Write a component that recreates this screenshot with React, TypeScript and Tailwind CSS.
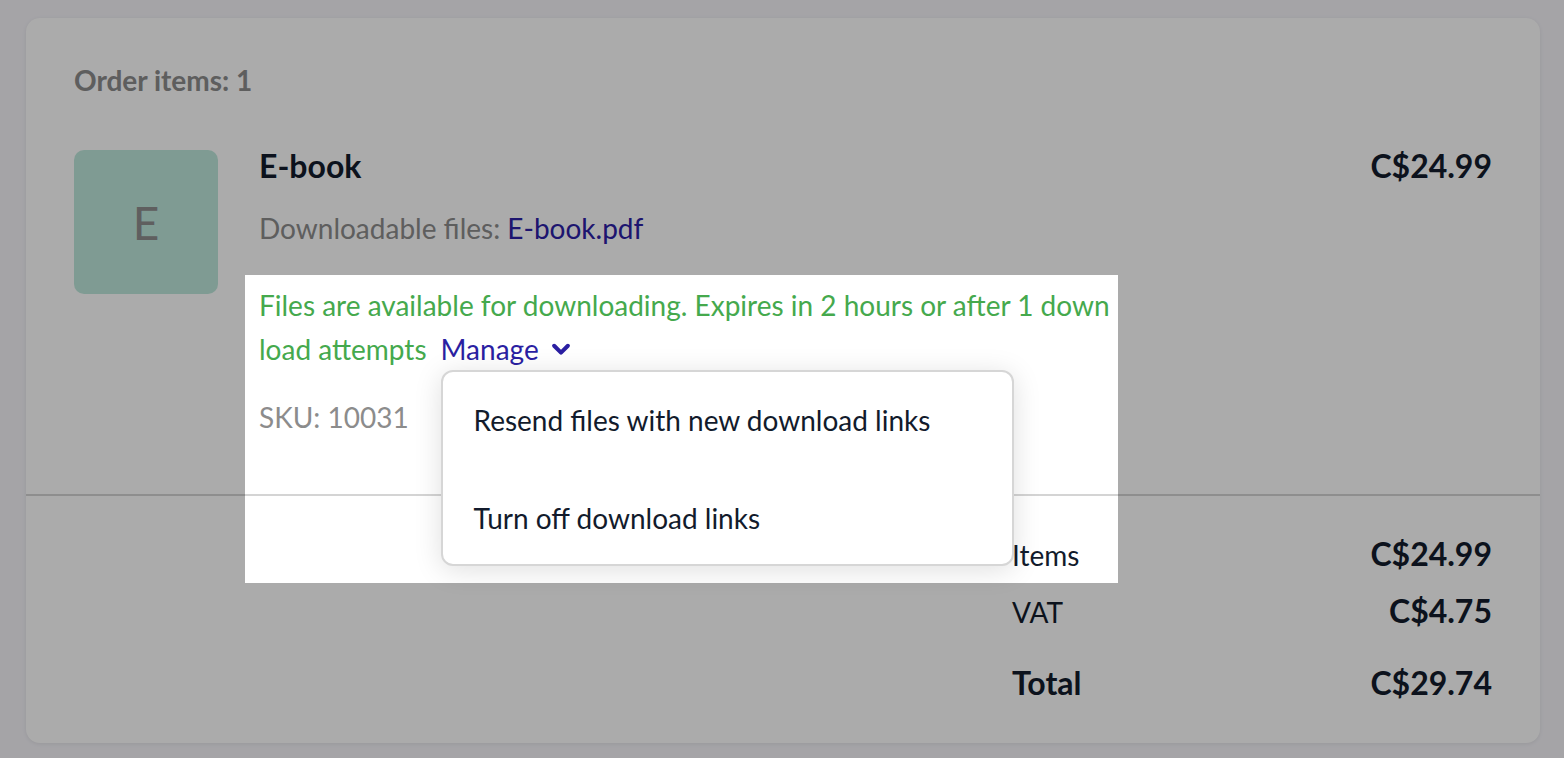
import React from "react";

const Chevron = () => (
  <svg width="22" height="22" viewBox="0 0 24 24" className="ml-[11px] inline-block" aria-hidden>
    <polyline points="4.5,8.5 12,16 19.5,8.5" fill="none" stroke="currentColor" strokeWidth="4.4" strokeLinecap="round" strokeLinejoin="round" />
  </svg>
);

const totals = [
  { label: "Items", value: "C$24.99", bold: false },
  { label: "VAT", value: "C$4.75", bold: false },
  { label: "Total", value: "C$29.74", bold: true },
];

const App = () => {
  return (
    <div className="min-h-screen bg-[#f6f5fa] pl-[26px] pr-[24px] pt-[18px] pb-[16px] font-['Lato','Open_Sans',sans-serif] text-[#121b2c]">
      <div className="rounded-[14px] bg-white shadow-[0_1px_4px_rgba(0,0,0,0.08)]">
        <div className="pl-[48px] pr-[48px] pt-[46px]">
          <h2 className="text-[28px] font-bold leading-[32px] text-[#8c8c8c]">Order items: 1</h2>

          <div className="mt-[54px] flex items-start">
            <div className="flex h-[144px] w-[144px] flex-none items-center justify-center rounded-[10px] bg-[#bee8dc] text-[46px] text-[#8e8e8e]">
              E
            </div>

            <div className="ml-[41px] flex-1">
              <div className="flex items-start justify-between">
                <h3 className="text-[32px] font-bold leading-[32px]">E-book</h3>
                <span className="text-[32px] font-bold leading-[32px]">C$24.99</span>
              </div>

              <p className="mt-[28px] text-[28px] leading-[36px] text-[#8c8c8c]">
                Downloadable files: <a className="text-[#2c20a6]">E-book.pdf</a>
              </p>

              <div className="relative mt-[37px] text-[28px] leading-[44px]">
                {/* spotlight cutout; the shadow dims everything around it */}
                <div className="pointer-events-none absolute left-[-14px] top-[-8px] z-10 h-[308px] w-[873px] shadow-[0_0_0_3000px_rgba(0,0,0,0.33)]" />

                <p className="text-[#45a94d]">
                  Files are available for downloading. Expires in 2 hours or after 1 down
                  <br />
                  load attempts
                  <span className="relative ml-[14px] inline-flex items-center text-[#2b1fa2]">
                    Manage
                    <Chevron />
                    <div className="absolute left-0 top-[43px] z-20 w-[573px] rounded-[12px] border-2 border-[#d6d6d6] bg-white text-[#121b2c] shadow-[0_4px_28px_rgba(0,0,0,0.13)]">
                      <div className="flex h-[96px] items-center whitespace-nowrap px-[31px]">
                        Resend files with new download links
                      </div>
                      <div className="flex h-[96px] items-center whitespace-nowrap px-[31px] pt-[4px]">
                        Turn off download links
                      </div>
                    </div>
                  </span>
                </p>

                <p className="mt-[24px] text-[#8c8c8c]">SKU: 10031</p>
              </div>
            </div>
          </div>
        </div>

        <div className="mt-[55px] border-t-2 border-[#d4d4d4]" />

        <div className="flex justify-end pl-[48px] pr-[48px] pt-[38px] pb-[40px]">
          <div className="w-[480px] text-[28px]">
            {totals.map((row, i) => (
              <div
                key={row.label}
                className={`flex items-baseline justify-between leading-[40px] ${i === 1 ? "mt-[16px]" : ""} ${i === 2 ? "mt-[31px]" : ""}`}
              >
                <span className={row.bold ? "text-[32px] font-bold" : ""}>{row.label}</span>
                <span className="text-[32px] font-bold">{row.value}</span>
              </div>
            ))}
          </div>
        </div>
      </div>
    </div>
  );
};

export default App;
